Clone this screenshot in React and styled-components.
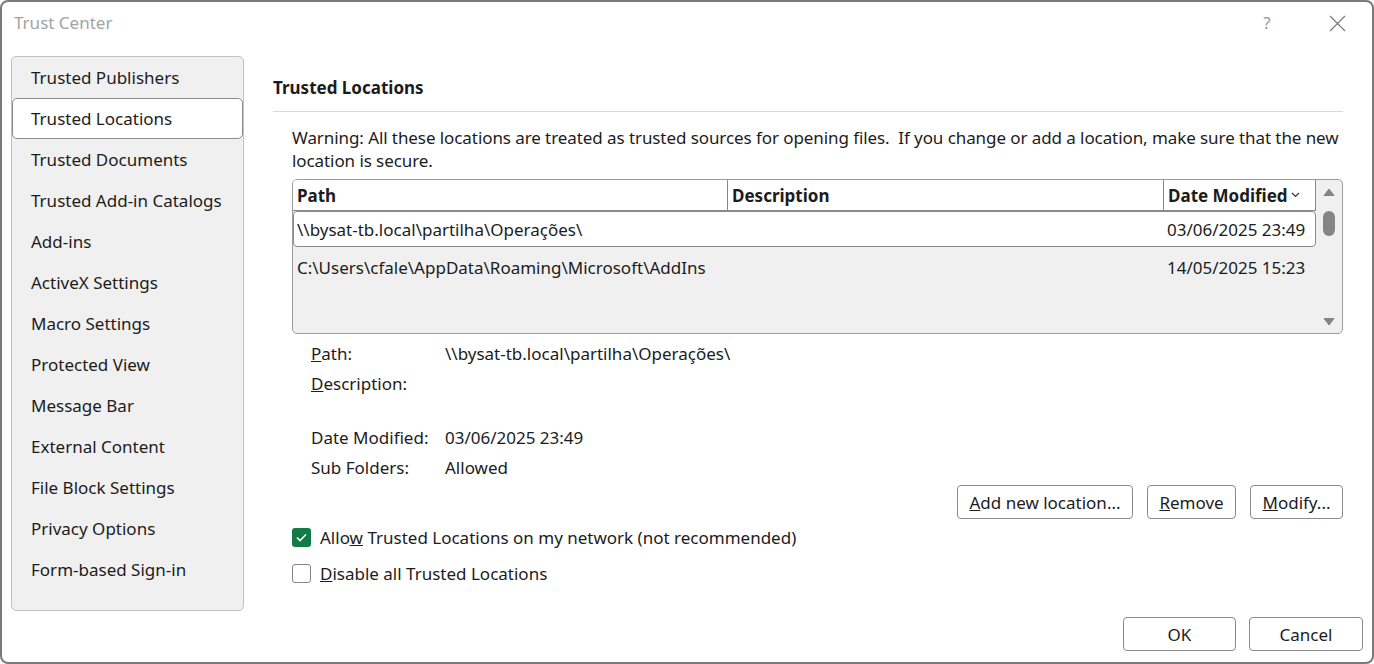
import React from 'react';
import styled, { createGlobalStyle } from 'styled-components';

const FONT = `"Noto Sans", "Open Sans", sans-serif`;
const SIZE = '17px';

const Global = createGlobalStyle`
  html, body { margin: 0; padding: 0; background: #ffffff; }
  body { font-family: ${FONT}; font-size: ${SIZE}; color: #1c1c1c; }
  * { box-sizing: border-box; }
`;

const Window = styled.div`
  width: 1374px;
  height: 664px;
  border: 2px solid #7a7a7a;
  border-radius: 8px;
  background: #fff;
  display: flex;
  flex-direction: column;
  overflow: hidden;
`;

const TitleBar = styled.div`
  height: 54px;
  display: flex;
  align-items: flex-start;
  padding: 9px 0 0 12px;
  line-height: 23px;
`;

const Title = styled.div`
  color: #a3a3a3;
`;

const TitleButton = styled.div`
  width: 70px;
  display: flex;
  justify-content: center;
  color: #9a9a9a;
  margin-left: ${p => (p.$first ? 'auto' : '0')};
`;

const Body = styled.div`
  display: flex;
  gap: 29px;
  padding: 0 29px 0 9px;
  height: 555px;
`;

const Sidebar = styled.nav`
  width: 233px;
  flex: none;
  background: #f0f0f0;
  border: 1px solid #c2c2c2;
  border-radius: 5px;
  padding: 0 0 20px 0;
`;

const NavItem = styled.div`
  height: 41px;
  display: flex;
  align-items: center;
  padding-left: 18px;
  border: 1px solid ${p => (p.$active ? '#8c8c8c' : 'transparent')};
  border-radius: 5px;
  background: ${p => (p.$active ? '#ffffff' : 'transparent')};
  white-space: nowrap;
`;

const Main = styled.main`
  flex: none;
  width: 1070px;
  min-width: 0;
  padding-top: 20px;
  display: flex;
  flex-direction: column;
`;

const Heading = styled.h2`
  margin: 0;
  font-size: ${SIZE};
  font-weight: 700;
  line-height: 23px;
`;

const Rule = styled.div`
  height: 1px;
  background: #d9d9d9;
  margin-top: 12px;
`;

const Warning = styled.p`
  margin: 14px 0 0 19px;
  line-height: 23px;
  white-space: nowrap;
  letter-spacing: -0.08px;
`;

const Table = styled.div`
  margin: 7px 0 0 19px;
  height: 155px;
  border: 1px solid #9c9c9c;
  border-radius: 5px;
  background: #f0f0f0;
  display: flex;
  overflow: hidden;
`;

const List = styled.div`
  width: 1023px;
  flex: none;
  display: flex;
  flex-direction: column;
`;

const HeaderRow = styled.div`
  display: grid;
  grid-template-columns: 435px 436px 152px;
  height: 31px;
  background: #fff;
  border-bottom: 1px solid #8a8a8a;
`;

const HeaderCell = styled.div`
  border-right: 1px solid #8a8a8a;
  display: flex;
  align-items: center;
  padding-left: 4px;
  font-weight: 700;
  white-space: nowrap;
  overflow: hidden;
`;

const Chevron = styled.svg`
  margin-left: 3px;
  flex: none;
`;

const Row = styled.div`
  display: grid;
  grid-template-columns: 870px 1fr;
  height: 36px;
  align-items: center;
  border: 1px solid ${p => (p.$selected ? '#8a8a8a' : 'transparent')};
  border-radius: 4px;
  background: ${p => (p.$selected ? '#ffffff' : 'transparent')};
  margin-top: ${p => (p.$selected ? '0' : '2px')};
  white-space: nowrap;
`;

const Cell = styled.div`
  padding-left: ${p => p.$pad || 3}px;
  overflow: hidden;
`;

const Scrollbar = styled.div`
  flex: 1;
  display: flex;
  flex-direction: column;
  align-items: center;
  padding: 8px 0 7px 0;
`;

const Thumb = styled.div`
  width: 12px;
  height: 25px;
  border-radius: 6px;
  background: #858585;
  margin-top: 14px;
`;

const Spacer = styled.div`
  flex: 1;
`;

const Details = styled.div`
  margin: 4px 0 0 38px;
  display: grid;
  grid-template-columns: 134px 1fr;
  grid-template-rows: 30px 30px 24px 30px 30px;
  align-items: center;
  white-space: nowrap;
`;

const Gap = styled.div`
  grid-column: 1 / -1;
`;

const ActionRow = styled.div`
  display: flex;
  justify-content: flex-end;
  gap: 14px;
  margin-top: 3px;
`;

const Button = styled.button`
  width: ${p => p.$w}px;
  height: 34px;
  border: 1px solid #8a8a8a;
  border-radius: 4px;
  background: #fff;
  font-family: ${FONT};
  font-size: ${SIZE};
  color: #1c1c1c;
  padding: 0;
  white-space: nowrap;
`;

const CheckRow = styled.label`
  display: flex;
  align-items: center;
  gap: 9px;
  height: 36px;
  margin-left: 19px;
  white-space: nowrap;
`;

const Box = styled.span`
  width: 19px;
  height: 19px;
  border-radius: 3px;
  flex: none;
  display: flex;
  align-items: center;
  justify-content: center;
  background: ${p => (p.$checked ? '#117a45' : '#ffffff')};
  border: ${p => (p.$checked ? 'none' : '1.5px solid #858585')};
`;

const Footer = styled.div`
  display: flex;
  justify-content: flex-end;
  gap: 13px;
  padding: 6px 9px 0 0;
`;

const navItems = [
  'Trusted Publishers',
  'Trusted Locations',
  'Trusted Documents',
  'Trusted Add-in Catalogs',
  'Add-ins',
  'ActiveX Settings',
  'Macro Settings',
  'Protected View',
  'Message Bar',
  'External Content',
  'File Block Settings',
  'Privacy Options',
  'Form-based Sign-in',
];

const rows = [
  { path: '\\\\bysat-tb.local\\partilha\\Operações\\', date: '03/06/2025 23:49', selected: true },
  { path: 'C:\\Users\\cfale\\AppData\\Roaming\\Microsoft\\AddIns', date: '14/05/2025 15:23' },
];

const Triangle = ({ down }) => (
  <svg width="12" height="9" viewBox="0 0 12 9">
    <path d={down ? 'M1 1.5 L11 1.5 L6 8 Z' : 'M1 7.5 L11 7.5 L6 1 Z'} fill="#858585" stroke="#858585" strokeLinejoin="round" />
  </svg>
);

export default function App() {
  return (
    <>
      <Global />
      <Window>
        <TitleBar>
          <Title>Trust Center</Title>
          <TitleButton $first>?</TitleButton>
          <TitleButton>
            <svg width="17" height="17" viewBox="0 0 17 17" style={{ marginTop: 4 }}>
              <path d="M1 1 L16 16 M16 1 L1 16" stroke="#7a7a7a" strokeWidth="1.2" fill="none" />
            </svg>
          </TitleButton>
        </TitleBar>
        <Body>
          <Sidebar>
            {navItems.map(n => (
              <NavItem key={n} $active={n === 'Trusted Locations'}>{n}</NavItem>
            ))}
          </Sidebar>
          <Main>
            <Heading>Trusted Locations</Heading>
            <Rule />
            <Warning>
              Warning: All these locations are treated as trusted sources for opening files.{'\u00a0 '}If you change or add a location, make sure that the new
              <br />
              location is secure.
            </Warning>
            <Table>
              <List>
                <HeaderRow>
                  <HeaderCell>Path</HeaderCell>
                  <HeaderCell>Description</HeaderCell>
                  <HeaderCell>
                    Date Modified
                    <Chevron width="9" height="6" viewBox="0 0 9 6">
                      <path d="M1 1 L4.5 4.5 L8 1" stroke="#333" strokeWidth="1.2" fill="none" />
                    </Chevron>
                  </HeaderCell>
                </HeaderRow>
                {rows.map(r => (
                  <Row key={r.path} $selected={r.selected}>
                    <Cell>{r.path}</Cell>
                    <Cell $pad={3}>{r.date}</Cell>
                  </Row>
                ))}
              </List>
              <Scrollbar>
                <Triangle />
                <Thumb />
                <Spacer />
                <Triangle down />
              </Scrollbar>
            </Table>
            <Details>
              <span><u>P</u>ath:</span>
              <span>\\bysat-tb.local\partilha\Operações\</span>
              <span><u>D</u>escription:</span>
              <span />
              <Gap />
              <span>Date Modified:</span>
              <span>03/06/2025 23:49</span>
              <span>Sub Folders:</span>
              <span>Allowed</span>
            </Details>
            <ActionRow>
              <Button $w={176}><u>A</u>dd new location...</Button>
              <Button $w={89}><u>R</u>emove</Button>
              <Button $w={93}><u>M</u>odify...</Button>
            </ActionRow>
            <CheckRow>
              <Box $checked>
                <svg width="11" height="9" viewBox="0 0 11 9">
                  <path d="M1 4.5 L4 7.5 L10 1.5" stroke="#fff" strokeWidth="1.6" fill="none" />
                </svg>
              </Box>
              <span>Allo<u>w</u> Trusted Locations on my network (not recommended)</span>
            </CheckRow>
            <CheckRow>
              <Box />
              <span><u>D</u>isable all Trusted Locations</span>
            </CheckRow>
          </Main>
        </Body>
        <Footer>
          <Button $w={113}>OK</Button>
          <Button $w={114}>Cancel</Button>
        </Footer>
      </Window>
    </>
  );
}
